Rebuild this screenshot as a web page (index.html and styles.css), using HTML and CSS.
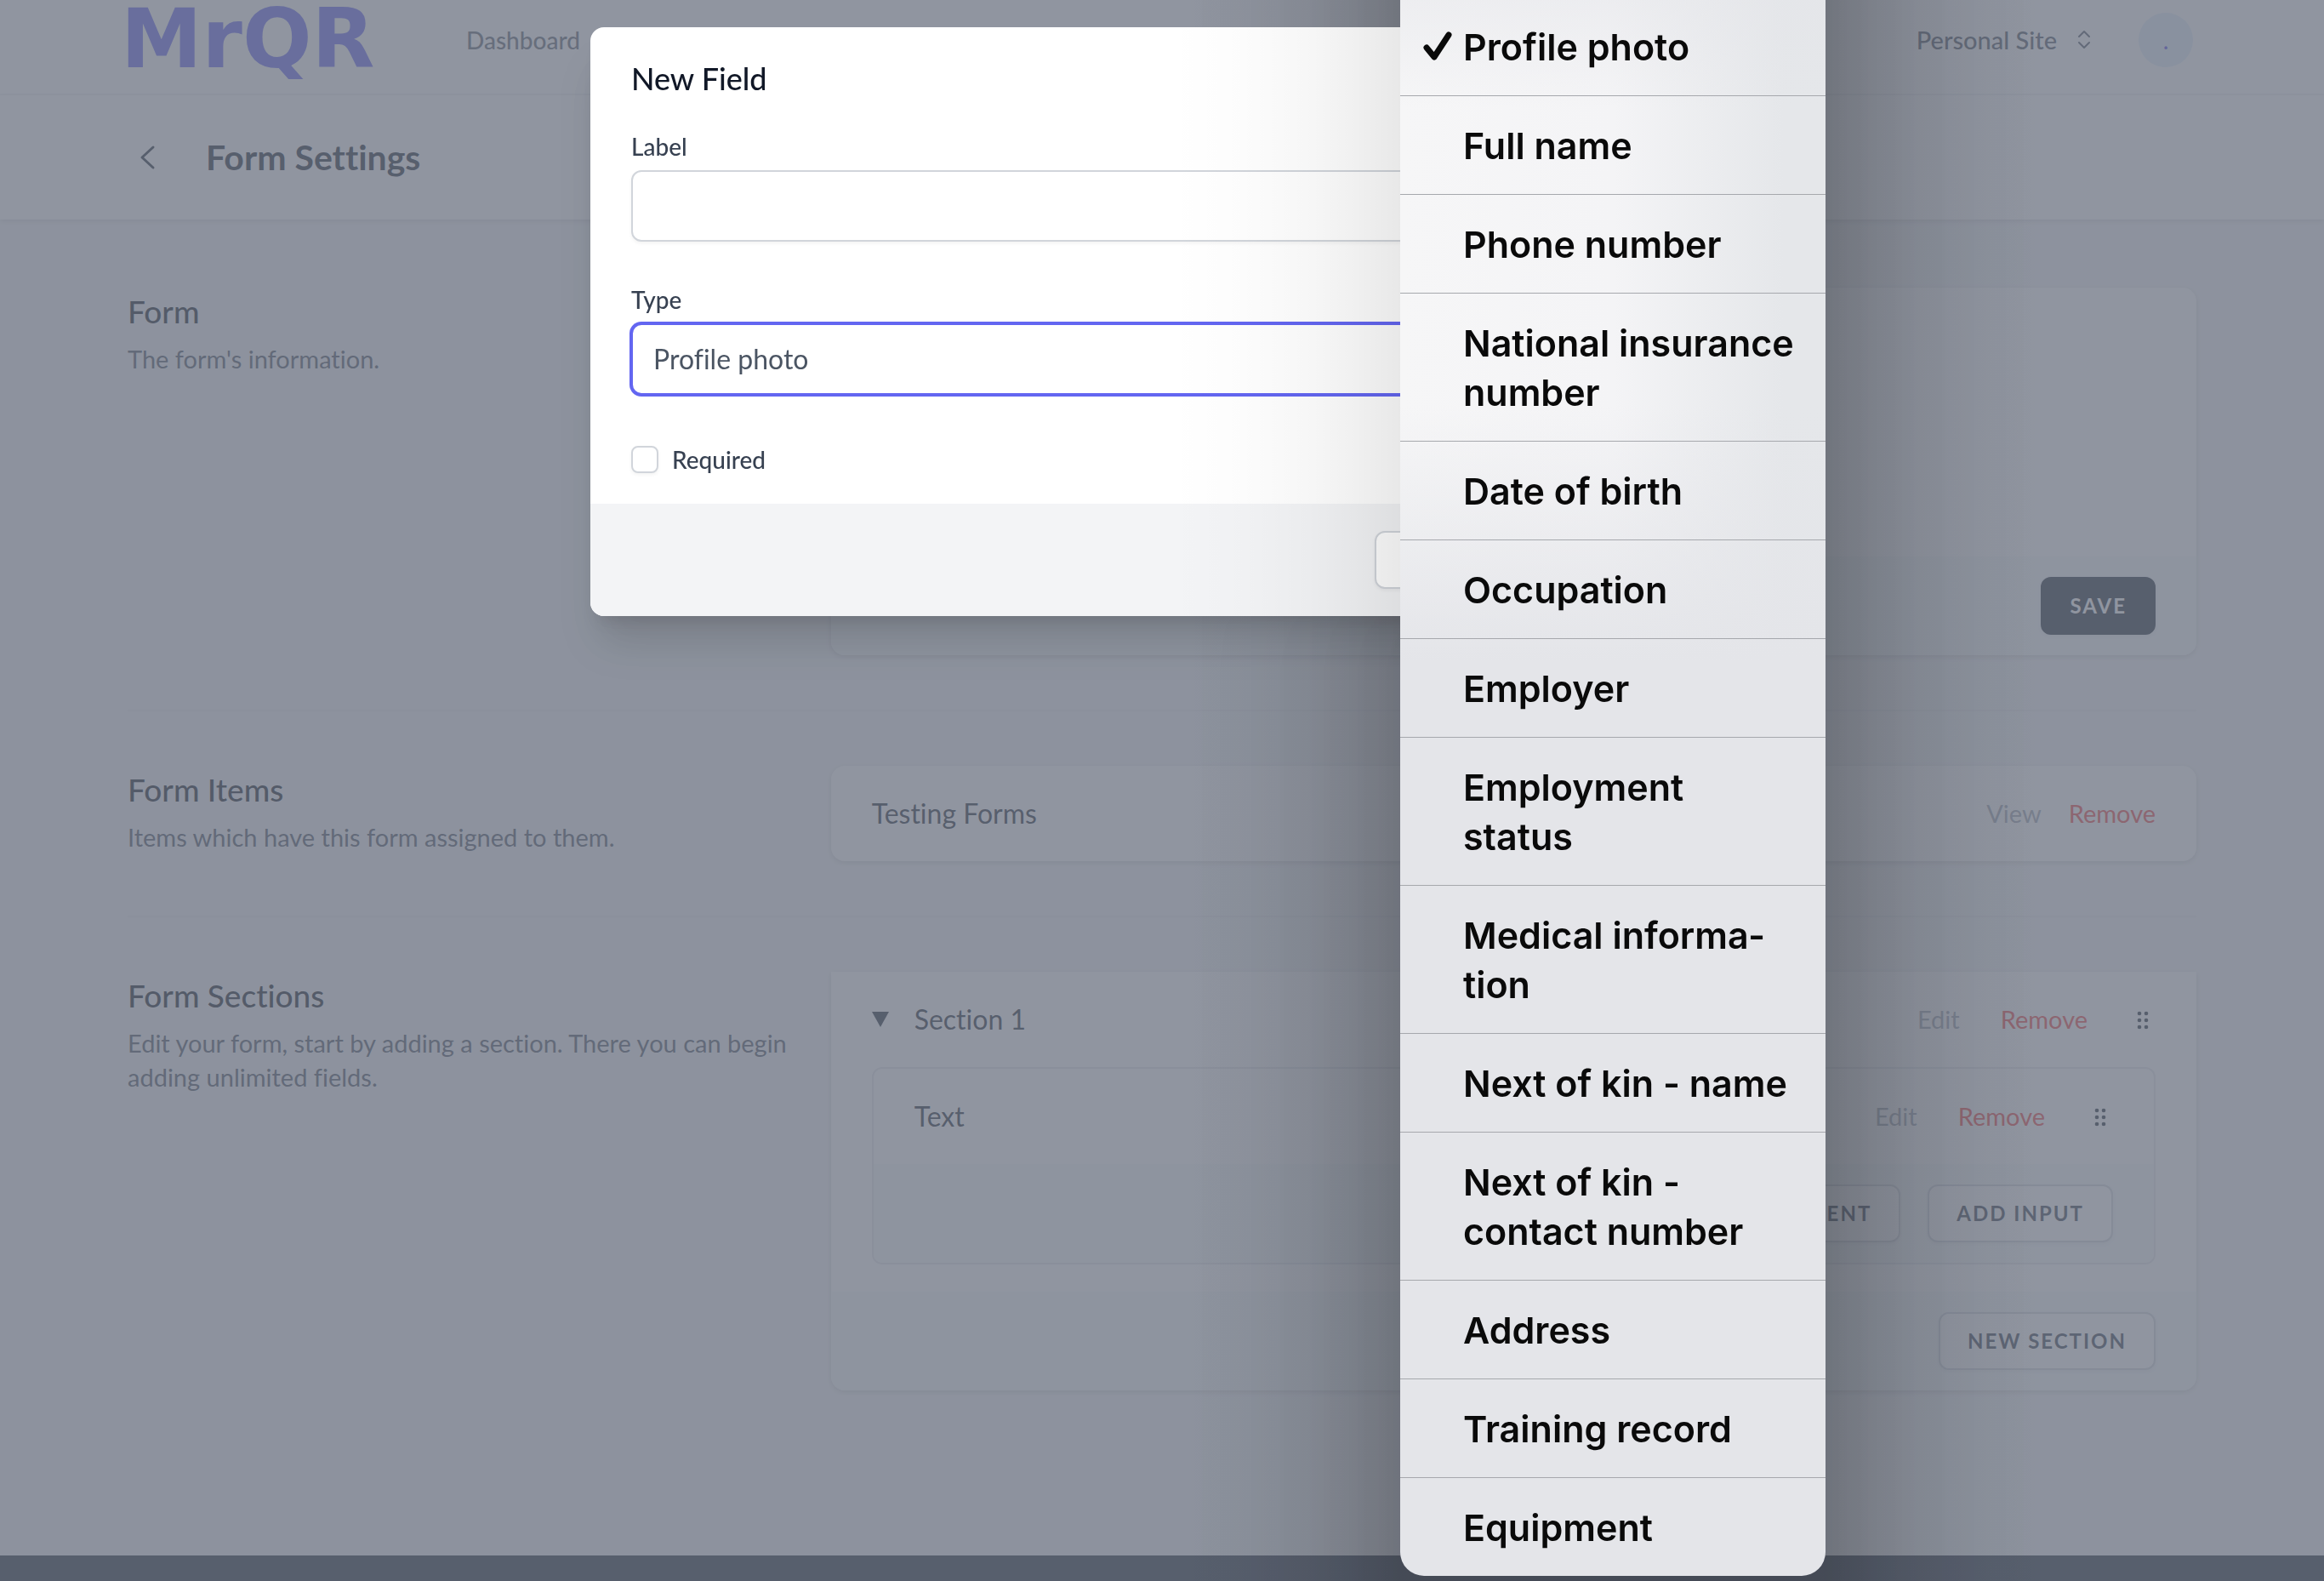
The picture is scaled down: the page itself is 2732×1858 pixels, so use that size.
FILE: index.html
```html
<!DOCTYPE html>
<html lang="en">
<head>
<meta charset="utf-8">
<title>Form Settings</title>
<meta name="viewport" content="width=device-width, initial-scale=1">
<link rel="stylesheet" href="styles.css">
</head>
<body>
<div class="page">
  <nav class="nav">
    <div class="container nav-inner">
      <a class="logo" href="#" aria-label="MrQR">
        <svg width="320" height="100" viewBox="0 0 320 100"><text class="logo-text" x="0" y="74">MrQR</text></svg>
      </a>
      <a class="nav-link" href="#">Dashboard</a>
      <button class="site-switch" type="button">Personal Site
        <svg width="32" height="32" viewBox="0 0 32 32" fill="none" stroke="currentColor" stroke-width="2" stroke-linecap="round" stroke-linejoin="round"><path d="M10 12l6-6 6 6M10 19l6 6 6-6"/></svg>
      </button>
      <button class="avatar" type="button">.</button>
    </div>
  </nav>

  <header class="header">
    <div class="container header-inner">
      <a class="back" href="#" aria-label="Back">
        <svg width="48" height="48" viewBox="0 0 48 48" fill="none" stroke="currentColor" stroke-width="3" stroke-linecap="round" stroke-linejoin="round"><path d="M30 12L17 24l13 12"/></svg>
      </a>
      <h1 class="page-title">Form Settings</h1>
    </div>
  </header>

  <main class="container main">
    <section class="block">
      <div class="intro">
        <h2 class="intro-title">Form</h2>
        <p class="intro-text">The form's information.</p>
      </div>
      <div class="card">
        <div class="card-space"></div>
        <div class="card-actions"><button class="btn btn-dark" type="button">Save</button></div>
      </div>
    </section>

    <section class="block">
      <div class="intro">
        <h2 class="intro-title">Form Items</h2>
        <p class="intro-text">Items which have this form assigned to them.</p>
      </div>
      <div class="card">
        <div class="row">
          <span class="row-name">Testing Forms</span>
          <span class="row-links row-links-tight"><a class="link" href="#">View</a><button class="link link-danger" type="button">Remove</button></span>
        </div>
      </div>
    </section>

    <section class="block">
      <div class="intro">
        <h2 class="intro-title">Form Sections</h2>
        <p class="intro-text">Edit your form, start by adding a section. There you can begin adding unlimited fields.</p>
      </div>
      <div class="card card-flat-top">
        <div class="row">
          <span class="row-name">
            <svg class="caret" width="20" height="18" viewBox="0 0 20 18"><path d="M0 0h20L10 18z" fill="currentColor"/></svg>
            Section 1
          </span>
          <span class="row-links">
            <button class="link" type="button">Edit</button>
            <button class="link link-danger" type="button">Remove</button>
            <svg class="grip" width="32" height="32" viewBox="0 0 32 32" fill="currentColor"><circle cx="13" cy="9" r="2.3"/><circle cx="21" cy="9" r="2.3"/><circle cx="13" cy="17" r="2.3"/><circle cx="21" cy="17" r="2.3"/><circle cx="13" cy="25" r="2.3"/><circle cx="21" cy="25" r="2.3"/></svg>
          </span>
        </div>
        <div class="fields">
          <div class="row">
            <span class="row-name">Text</span>
            <span class="row-links">
              <button class="link" type="button">Edit</button>
              <button class="link link-danger" type="button">Remove</button>
              <svg class="grip" width="32" height="32" viewBox="0 0 32 32" fill="currentColor"><circle cx="13" cy="9" r="2.3"/><circle cx="21" cy="9" r="2.3"/><circle cx="13" cy="17" r="2.3"/><circle cx="21" cy="17" r="2.3"/><circle cx="13" cy="25" r="2.3"/><circle cx="21" cy="25" r="2.3"/></svg>
            </span>
          </div>
          <div class="card-actions">
            <button class="btn" type="button">Add Content</button>
            <button class="btn" type="button">Add Input</button>
          </div>
        </div>
        <div class="card-actions"><button class="btn" type="button">New Section</button></div>
      </div>
    </section>
  </main>

  <footer class="footer"></footer>
</div>

<div class="backdrop"></div>

<div class="modal-layer">
  <form class="modal" role="dialog" aria-labelledby="modal-title">
    <div class="modal-body">
      <h2 class="modal-title" id="modal-title">New Field</h2>
      <div class="field">
        <label class="label" for="field-label">Label</label>
        <input class="control" id="field-label" type="text">
      </div>
      <div class="field">
        <label class="label" for="field-type">Type</label>
        <select class="control control-active" id="field-type"><option>Profile photo</option></select>
      </div>
      <div class="check">
        <input class="checkbox" id="field-required" type="checkbox">
        <label class="label" for="field-required">Required</label>
      </div>
    </div>
    <div class="modal-actions">
      <button class="btn btn-modal" type="button" aria-label="Cancel"></button>
      <button class="btn btn-dark btn-modal" type="button" aria-label="Save"></button>
    </div>
  </form>
</div>

<ul class="menu" role="listbox" aria-label="Type">
  <li><button class="option" type="button" role="option" aria-selected="true"><svg class="tick" width="38" height="38" viewBox="0 0 38 38" fill="none" stroke="currentColor" stroke-width="7" stroke-linecap="round" stroke-linejoin="round"><path d="M5 20l9 11L31 5"/></svg>Profile photo</button></li>
  <li><button class="option" type="button" role="option">Full name</button></li>
  <li><button class="option" type="button" role="option">Phone number</button></li>
  <li><button class="option" type="button" role="option">National insurance number</button></li>
  <li><button class="option" type="button" role="option">Date of birth</button></li>
  <li><button class="option" type="button" role="option">Occupation</button></li>
  <li><button class="option" type="button" role="option">Employer</button></li>
  <li><button class="option" type="button" role="option">Employment status</button></li>
  <li><button class="option" type="button" role="option">Medical informa&shy;tion</button></li>
  <li><button class="option" type="button" role="option">Next of kin - name</button></li>
  <li><button class="option" type="button" role="option">Next of kin - contact number</button></li>
  <li><button class="option" type="button" role="option">Address</button></li>
  <li><button class="option" type="button" role="option">Training record</button></li>
  <li><button class="option" type="button" role="option">Equipment</button></li>
</ul>
</body>
</html>
```

FILE: styles.css
```css
*, *::before, *::after { box-sizing: border-box; }

body {
  margin: 0;
  height: 100vh;
  overflow: hidden;
  background: #f3f4f6;
  color: #1f2937;
  font-family: Lato, "Open Sans", sans-serif;
  font-size: 32px;
  line-height: 48px;
  font-variant-ligatures: none;
}

h1, h2, p, ul { margin: 0; padding: 0; }
button, input, select { font: inherit; color: inherit; }
button { cursor: pointer; }
a { color: inherit; text-decoration: none; }
svg { display: block; flex: none; }

.page { height: 100vh; display: flex; flex-direction: column; overflow: hidden; }
.container { width: 100%; max-width: 2560px; margin: 0 auto; padding: 0 64px; }

/* Top bar */
.nav { background: #fff; border-bottom: 2px solid #f3f4f6; }
.nav-inner { height: 110px; display: flex; align-items: center; padding-bottom: 16px; }
.logo { margin: 16px 86px 0 -8px; }
.logo-text { font-family: "DejaVu Sans", sans-serif; font-weight: 700; font-size: 96px; fill: #6366f1; }
.nav-link, .site-switch { font-size: 28px; line-height: 40px; font-weight: 500; color: #6b7280; }
.nav-link { color: #5b6472; }
.site-switch { display: flex; align-items: center; gap: 16px; margin-left: auto; padding: 0; border: 0; background: none; font-size: 29px; color: #4b5563; }
.avatar { width: 64px; height: 64px; margin: 0 4px 0 48px; padding: 0; border: 0; border-radius: 50%; background: #e3eefb; color: #4f46e5; font-size: 28px; }

/* Page heading */
.header { background: #fff; box-shadow: 0 2px 6px rgba(0, 0, 0, .12); }
.header-inner { display: flex; align-items: center; gap: 44px; padding-top: 48px; padding-bottom: 48px; }
.back { display: block; }
.page-title { font-size: 41px; line-height: 50px; font-weight: 700; }

/* Settings blocks */
.main { flex: none; padding-top: 80px; padding-bottom: 194px; }
.block { display: grid; grid-template-columns: repeat(3, 1fr); gap: 48px; }
.block + .block { margin-top: 64px; padding-top: 64px; border-top: 2px solid #e9ebee; }
.intro-title { font-size: 37px; line-height: 56px; font-weight: 500; color: #111827; }
.intro-text { margin-top: 8px; font-size: 29px; line-height: 40px; color: #4b5563; }
.card { grid-column: span 2; background: #fff; border-radius: 16px; overflow: hidden; box-shadow: 0 2px 6px rgba(0, 0, 0, .14); }
.card-flat-top { border-radius: 0 0 16px 16px; }
.card-space { height: 316px; }
.card-actions { display: flex; justify-content: flex-end; gap: 32px; padding: 24px 48px; background: #f5f9fa; }
.row { display: flex; align-items: center; justify-content: space-between; padding: 32px 48px; }
.row-name { display: flex; align-items: center; gap: 30px; }
.row-links { display: flex; align-items: center; gap: 48px; }
.row-links-tight { gap: 32px; }
.link { padding: 0; border: 0; background: none; font-size: 29px; line-height: 40px; color: #9ca3af; }
.link-danger { color: #ef4444; }
.fields { margin: 0 48px 32px; border: 2px solid #e5e7eb; border-radius: 12px; overflow: hidden; }

.btn { padding: 16px 32px; border: 2px solid #d1d5db; border-radius: 12px; background: #fff; color: #374151; font-size: 24px; line-height: 32px; font-weight: 700; letter-spacing: 2px; text-transform: uppercase; box-shadow: 0 2px 4px rgba(0, 0, 0, .05); }
.btn-dark { border-color: #1f2937; background: #1f2937; color: #fff; }

.footer { flex: 1; min-height: 30px; background: #1f2937; }

/* Dialog */
.backdrop { position: fixed; inset: 0; background: rgba(107, 114, 128, .75); }
.backdrop::after,
.modal-layer::after {
  content: "";
  position: absolute;
  left: calc(50% + 10px);
  top: 0;
  bottom: 0;
  width: 1040px;
  background: linear-gradient(to right, transparent, rgba(0, 0, 0, .12) 80px, rgba(0, 0, 0, .36) 160px, rgba(0, 0, 0, .64) 215px, #000 270px, #000 770px, rgba(0, 0, 0, .64) 825px, rgba(0, 0, 0, .36) 880px, rgba(0, 0, 0, .12) 960px, transparent);
  pointer-events: none;
}
.backdrop::after { opacity: .14; }
.modal-layer::after { opacity: .09; }
.modal-layer { position: fixed; inset: 0; padding-top: 32px; }
.modal { max-width: 1344px; margin: 0 auto; border-radius: 16px; overflow: hidden; background: #fff; box-shadow: 0 40px 50px -10px rgba(0, 0, 0, .14), 0 16px 20px -12px rgba(0, 0, 0, .12); }
.modal-body { padding: 32px 48px; }
.modal-title { margin: 0 0 32px; font-size: 36px; line-height: 56px; font-weight: 500; color: #111827; }
.field + .field { margin-top: 48px; }
.label { display: block; font-size: 28px; line-height: 40px; font-weight: 500; color: #374151; }
.control { display: block; width: 100%; height: 84px; margin-top: 8px; padding: 0 24px; border: 2px solid #d1d5db; border-radius: 12px; background: #fff; color: #4b5563; font-size: 32px; line-height: 48px; appearance: none; box-shadow: 0 2px 4px rgba(0, 0, 0, .05); }
.control-active { border-color: #6366f1; box-shadow: 0 0 0 2px #6366f1; }
.check { display: flex; align-items: center; gap: 16px; margin-top: 56px; }
.checkbox { appearance: none; width: 32px; height: 32px; margin: 0; border: 2px solid #d1d5db; border-radius: 8px; background: #fff; box-shadow: 0 2px 4px rgba(0, 0, 0, .05); }
.modal-actions { display: flex; justify-content: flex-end; gap: 24px; padding: 32px 48px; background: #f3f4f6; }
.btn-modal { width: 175px; height: 68px; }

/* Option list opened from the select */
.menu {
  position: fixed;
  left: calc(50% + 280px);
  top: -3px;
  width: 500px;
  border-radius: 0 0 28px 28px;
  overflow: hidden;
  list-style: none;
  background:
    linear-gradient(to bottom, rgba(228, 229, 233, .5), rgba(228, 229, 233, 0) 130px, rgba(228, 229, 233, 0) 480px, #e4e5e9 780px),
    linear-gradient(to right, #f6f6f7, #f4f4f6 50%, #e5e7ea 90%);
}
.menu li + li { border-top: 1px solid #a6a8ad; }
.option { position: relative; display: block; width: 100%; padding: 29px 32px 28px 74px; border: 0; background: none; color: #0a0a0a; font-family: Inter, sans-serif; font-size: 43px; line-height: 58px; font-weight: 600; text-align: left; }
.tick { position: absolute; left: 26px; top: 39px; }
```
